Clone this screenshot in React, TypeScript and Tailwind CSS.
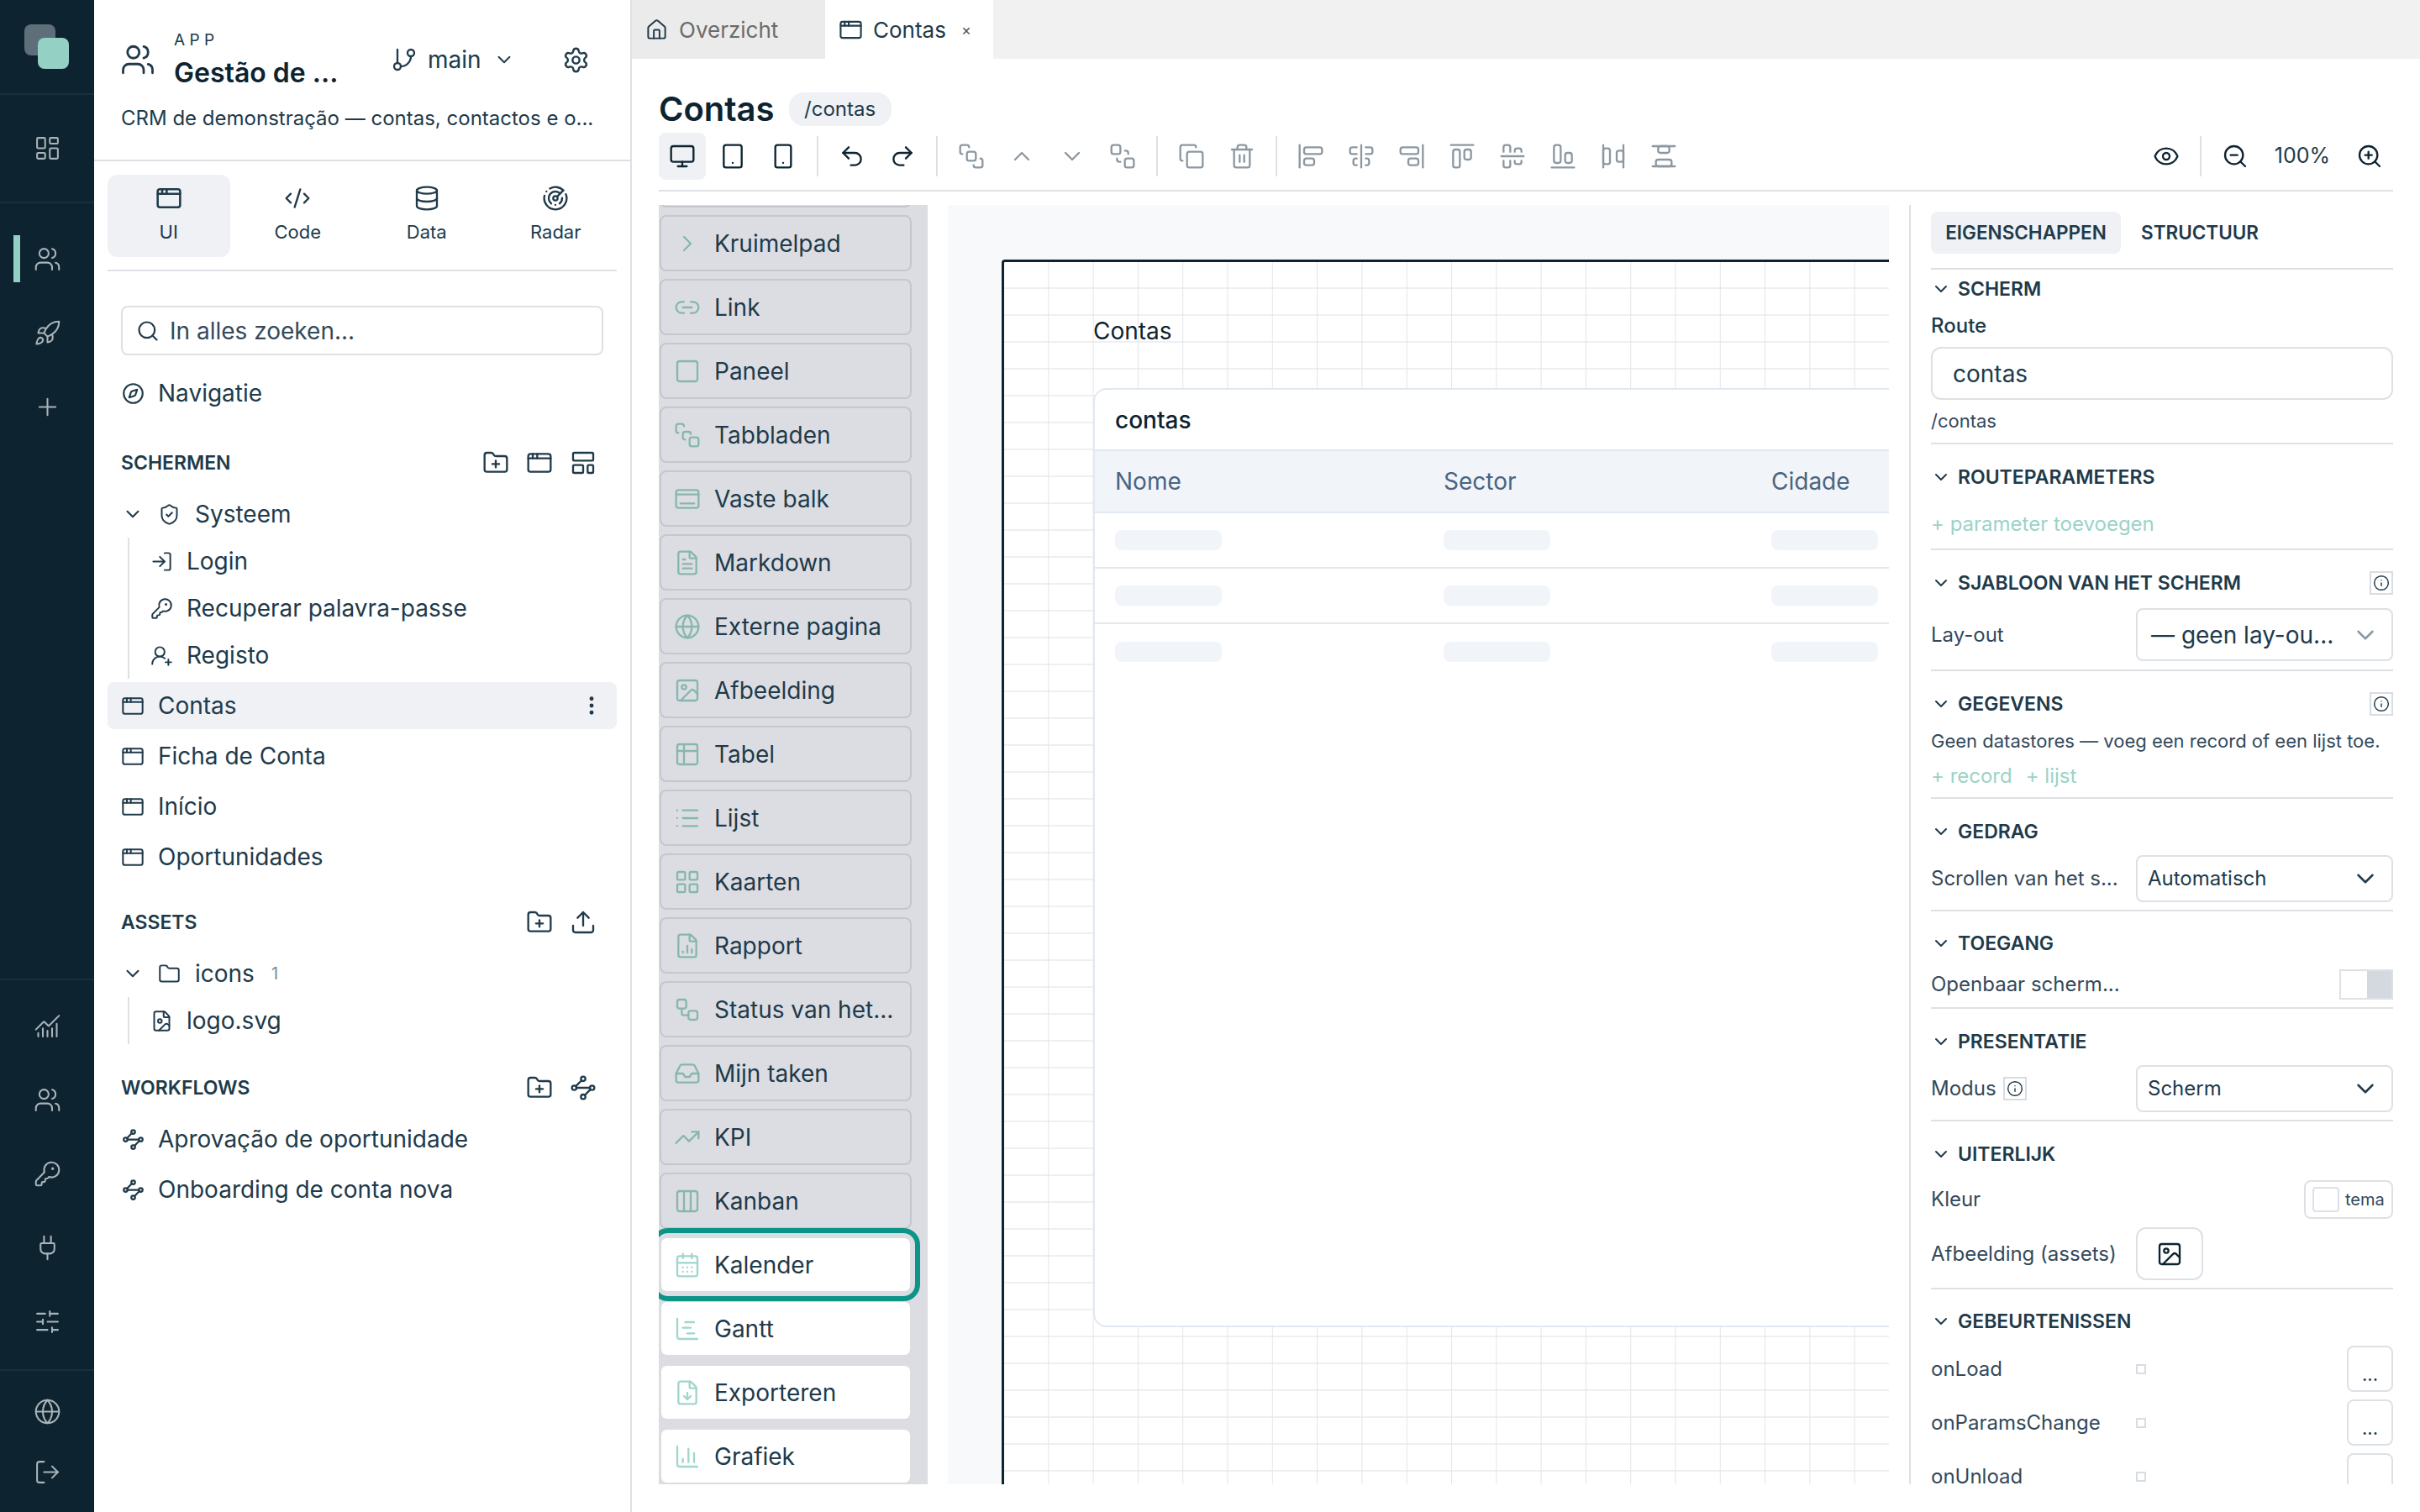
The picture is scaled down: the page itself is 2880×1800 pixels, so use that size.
import type { ReactNode } from "react";
import {
  AlignCenterHorizontal,
  AlignCenterVertical,
  AlignEndHorizontal,
  AlignEndVertical,
  AlignHorizontalSpaceBetween,
  AlignStartHorizontal,
  AlignStartVertical,
  AlignVerticalSpaceBetween,
  AppWindow,
  BringToFront,
  CalendarDays,
  ChartColumn,
  ChartGantt,
  ChartNoAxesCombined,
  ChevronDown,
  ChevronRight,
  ChevronUp,
  CodeXml,
  Columns3,
  Compass,
  Copy,
  Database,
  Eye,
  EllipsisVertical,
  FileChartColumn,
  FileDown,
  FileImage,
  FileText,
  Folder,
  FolderPlus,
  GitBranch,
  Globe,
  House,
  Image,
  Inbox,
  Info,
  KeyRound,
  LayoutDashboard,
  LayoutGrid,
  LayoutTemplate,
  Link2,
  List,
  LogIn,
  LogOut,
  Monitor,
  Plug,
  Plus,
  Radar,
  Redo2,
  Rocket,
  Search,
  SendToBack,
  Settings,
  ShieldCheck,
  SlidersHorizontal,
  Smartphone,
  Square,
  Table2,
  Tablet,
  Trash2,
  TrendingUp,
  Undo2,
  Upload,
  UserRoundPlus,
  Users,
  Workflow,
  ZoomIn,
  ZoomOut,
} from "lucide-react";

// lucide has no match for these palette and workflow glyphs
function TabsGlyph({ size = 32, strokeWidth = 1.75 }: { size?: number; strokeWidth?: number }) {
  return (
    <svg width={size} height={size} viewBox="0 0 24 24" fill="none" stroke="currentColor" strokeWidth={strokeWidth} strokeLinecap="round" strokeLinejoin="round">
      <path d="M4 10a2 2 0 0 1-2-2V4a2 2 0 0 1 2-2h3a2 2 0 0 1 2 2" />
      <path d="M10 16a2 2 0 0 1-2-2v-3a2 2 0 0 1 2-2h3a2 2 0 0 1 2 2" />
      <rect x="14" y="14" width="8" height="8" rx="2" />
    </svg>
  );
}

function BarGlyph({ size = 32, strokeWidth = 1.75 }: { size?: number; strokeWidth?: number }) {
  return (
    <svg width={size} height={size} viewBox="0 0 24 24" fill="none" stroke="currentColor" strokeWidth={strokeWidth} strokeLinecap="round" strokeLinejoin="round">
      <rect x="2" y="4" width="20" height="16" rx="2" />
      <path d="M2 8h20" />
      <path d="M6 16h12" />
    </svg>
  );
}

function WaypointGlyph({ size = 27, strokeWidth = 2 }: { size?: number; strokeWidth?: number }) {
  return (
    <svg width={size} height={size} viewBox="0 0 24 24" fill="none" stroke="currentColor" strokeWidth={strokeWidth} strokeLinecap="round" strokeLinejoin="round">
      <circle cx="12" cy="4" r="2" />
      <circle cx="4" cy="12" r="2" />
      <circle cx="20" cy="12" r="2" />
      <circle cx="12" cy="20" r="2" />
      <path d="m10.6 5.4-5.2 5.2" />
      <path d="m18.6 13.4-5.2 5.2" />
      <path d="M6 12h12" />
    </svg>
  );
}

const paletteItems = [
  { label: "Kruimelpad", icon: ChevronRight },
  { label: "Link", icon: Link2 },
  { label: "Paneel", icon: Square },
  { label: "Tabbladen", icon: TabsGlyph },
  { label: "Vaste balk", icon: BarGlyph },
  { label: "Markdown", icon: FileText },
  { label: "Externe pagina", icon: Globe },
  { label: "Afbeelding", icon: Image },
  { label: "Tabel", icon: Table2 },
  { label: "Lijst", icon: List },
  { label: "Kaarten", icon: LayoutGrid },
  { label: "Rapport", icon: FileChartColumn },
  { label: "Status van het...", icon: Workflow },
  { label: "Mijn taken", icon: Inbox },
  { label: "KPI", icon: TrendingUp },
  { label: "Kanban", icon: Columns3 },
];

const lightItems = [
  { label: "Gantt", icon: ChartGantt },
  { label: "Exporteren", icon: FileDown },
  { label: "Grafiek", icon: ChartColumn },
];

function RailIcon({ children }: { children: ReactNode }) {
  return <div className="flex h-[88px] items-center justify-center text-[#aab4b9]">{children}</div>;
}

function Rail() {
  return (
    <aside className="flex h-full w-[112px] shrink-0 flex-col bg-[#0d2330]">
      <div className="flex h-[113px] shrink-0 border-b-2 border-[#16303f] pl-[29px] pt-[29px]">
        <div className="relative h-[37px] w-[37px] rounded-[8px] bg-[#5f6f79]">
          <div className="absolute left-[16px] top-[16px] h-[37px] w-[37px] rounded-[8px] bg-[#95d0c5]" />
        </div>
      </div>
      <div className="flex h-[129px] shrink-0 items-center justify-center border-b-2 border-[#16303f] text-[#aab4b9]">
        <LayoutDashboard size={33} strokeWidth={1.5} />
      </div>
      <div className="relative mt-[22px] flex h-[88px] items-center justify-center text-[#aab4b9]">
        <div className="absolute left-[16px] top-[16px] h-[56px] w-[8px] bg-[#95d0c5]" />
        <Users size={33} strokeWidth={1.5} />
      </div>
      <RailIcon>
        <Rocket size={33} strokeWidth={1.5} />
      </RailIcon>
      <RailIcon>
        <Plus size={33} strokeWidth={1.5} />
      </RailIcon>
      <div className="mt-auto border-t-2 border-[#16303f] pb-[13px] pt-[10px]">
        <RailIcon>
          <ChartNoAxesCombined size={33} strokeWidth={1.5} />
        </RailIcon>
        <RailIcon>
          <Users size={33} strokeWidth={1.5} />
        </RailIcon>
        <RailIcon>
          <KeyRound size={33} strokeWidth={1.5} />
        </RailIcon>
        <RailIcon>
          <Plug size={33} strokeWidth={1.5} />
        </RailIcon>
        <RailIcon>
          <SlidersHorizontal size={33} strokeWidth={1.5} />
        </RailIcon>
      </div>
      <div className="border-t-2 border-[#16303f] pb-[12px] pt-[12px]">
        <div className="flex h-[72px] items-center justify-center text-[#aab4b9]">
          <Globe size={33} strokeWidth={1.5} />
        </div>
        <div className="flex h-[72px] items-center justify-center text-[#aab4b9]">
          <LogOut size={33} strokeWidth={1.5} />
        </div>
      </div>
    </aside>
  );
}

function TreeRow({ icon, label, active }: { icon: ReactNode; label: string; active?: boolean }) {
  return (
    <div className={`flex h-[56px] items-center rounded-[8px] pl-[16px] pr-[16px] text-[28px] text-[#203a4a] ${active ? "bg-[#eff1f5]" : ""}`}>
      <div className="flex w-[28px] justify-center">{icon}</div>
      <span className="ml-[16px]">{label}</span>
      {active && <EllipsisVertical size={28} strokeWidth={2.25} className="ml-auto" />}
    </div>
  );
}

function NestedRow({ icon, label }: { icon: ReactNode; label: string }) {
  return (
    <div className="flex h-[56px] items-center pl-[24px] text-[28px] text-[#203a4a]">
      <div className="flex w-[28px] justify-center">{icon}</div>
      <span className="ml-[16px]">{label}</span>
    </div>
  );
}

function SectionHead({ title, children, className }: { title: string; children: ReactNode; className: string }) {
  return (
    <div className={`flex h-[40px] items-center justify-between pl-[16px] pr-[24px] text-[#203a4a] ${className}`}>
      <span className="text-[23px] font-semibold">{title}</span>
      <div className="flex gap-[20px]">{children}</div>
    </div>
  );
}

function ModeTab({ icon, label, active }: { icon: ReactNode; label: string; active?: boolean }) {
  return (
    <div className={`flex h-[98px] flex-col items-center rounded-[12px] pt-[12px] text-[#203a4a] ${active ? "bg-[#eff1f5]" : ""}`}>
      <div className="h-[32px]">{icon}</div>
      <span className="mt-[8px] text-[22px]">{label}</span>
    </div>
  );
}

function LeftPanel() {
  return (
    <div className="h-full w-[640px] shrink-0 border-r-2 border-[#dde1e6]">
      <header className="h-[192px] border-b-2 border-[#dde1e6] px-[32px] text-[#203a4a]">
        <div className="flex h-[112px] items-center pt-[30px]">
          <Users size={42} strokeWidth={1.6} className="-ml-[1px]" />
          <div className="ml-[22px] w-[246px]">
            <div className="text-[19px] leading-[26px] tracking-[0.28em]">APP</div>
            <div className="mt-[6px] text-[32px] font-semibold leading-[40px] text-[#0d2330]">Gestão de ...</div>
          </div>
          <GitBranch size={32} strokeWidth={1.75} className="ml-[12px]" />
          <span className="ml-[12px] text-[28px]">main</span>
          <ChevronDown size={26} strokeWidth={1.75} className="ml-[14px]" />
          <Settings size={33} strokeWidth={1.75} className="ml-[56px]" />
        </div>
        <p className="mt-[11px] whitespace-nowrap text-[24px] leading-[36px]">CRM de demonstração — contas, contactos e o...</p>
      </header>

      <div className="mx-[16px] grid grid-cols-4 gap-[8px] border-b-2 border-[#dde1e6] pb-[15px] pt-[16px]">
        <ModeTab active label="UI" icon={<AppWindow size={32} strokeWidth={1.9} />} />
        <ModeTab label="Code" icon={<CodeXml size={32} strokeWidth={1.75} />} />
        <ModeTab label="Data" icon={<Database size={32} strokeWidth={1.75} />} />
        <ModeTab label="Radar" icon={<Radar size={32} strokeWidth={1.75} />} />
      </div>

      <div className="mx-[32px] mt-[41px] flex h-[59px] items-center rounded-[8px] border-2 border-[#dde1e6] pl-[16px] text-[#203a4a]">
        <Search size={28} strokeWidth={1.9} />
        <span className="ml-[12px] text-[28px] text-[#33495a]">In alles zoeken...</span>
      </div>

      <div className="mx-[16px] mt-[17px]">
        <TreeRow label="Navigatie" icon={<Compass size={27} strokeWidth={1.9} />} />
      </div>

      <SectionHead title="SCHERMEN" className="mx-[16px] mt-[35px]">
        <FolderPlus size={32} strokeWidth={1.75} />
        <AppWindow size={32} strokeWidth={1.75} />
        <LayoutTemplate size={32} strokeWidth={1.75} />
      </SectionHead>

      <div className="mx-[16px] mt-[13px]">
        <div className="flex h-[56px] items-center pl-[16px] text-[28px] text-[#203a4a]">
          <div className="flex w-[28px] justify-center">
            <ChevronDown size={26} strokeWidth={1.9} />
          </div>
          <div className="ml-[15px] flex w-[28px] justify-center">
            <ShieldCheck size={27} strokeWidth={1.75} />
          </div>
          <span className="ml-[17px]">Systeem</span>
        </div>
        <div className="ml-[24px] border-l-2 border-[#dde1e6]">
          <NestedRow label="Login" icon={<LogIn size={27} strokeWidth={1.75} />} />
          <NestedRow label="Recuperar palavra-passe" icon={<KeyRound size={27} strokeWidth={1.75} />} />
          <NestedRow label="Registo" icon={<UserRoundPlus size={27} strokeWidth={1.75} />} />
        </div>
        <div className="mt-[4px] flex flex-col gap-[4px]">
          <TreeRow active label="Contas" icon={<AppWindow size={29} strokeWidth={1.75} />} />
          <TreeRow label="Ficha de Conta" icon={<AppWindow size={29} strokeWidth={1.75} />} />
          <TreeRow label="Início" icon={<AppWindow size={29} strokeWidth={1.75} />} />
          <TreeRow label="Oportunidades" icon={<AppWindow size={29} strokeWidth={1.75} />} />
        </div>
      </div>

      <SectionHead title="ASSETS" className="mx-[16px] mt-[30px]">
        <FolderPlus size={32} strokeWidth={1.75} />
        <Upload size={32} strokeWidth={1.75} />
      </SectionHead>

      <div className="mx-[16px] mt-[13px]">
        <div className="flex h-[56px] items-center pl-[16px] text-[28px] text-[#203a4a]">
          <div className="flex w-[28px] justify-center">
            <ChevronDown size={26} strokeWidth={1.9} />
          </div>
          <div className="ml-[15px] flex w-[28px] justify-center">
            <Folder size={27} strokeWidth={1.75} />
          </div>
          <span className="ml-[17px]">icons</span>
          <span className="ml-[20px] text-[20px] text-[#7b8a94]">1</span>
        </div>
        <div className="ml-[24px] border-l-2 border-[#dde1e6]">
          <NestedRow label="logo.svg" icon={<FileImage size={27} strokeWidth={1.75} />} />
        </div>
      </div>

      <SectionHead title="WORKFLOWS" className="mx-[16px] mt-[32px]">
        <FolderPlus size={32} strokeWidth={1.75} />
        <WaypointGlyph size={32} strokeWidth={1.75} />
      </SectionHead>

      <div className="mx-[16px] mt-[13px] flex flex-col gap-[4px]">
        <TreeRow label="Aprovação de oportunidade" icon={<WaypointGlyph />} />
        <TreeRow label="Onboarding de conta nova" icon={<WaypointGlyph />} />
      </div>
    </div>
  );
}

function ToolButton({ children, dim, active }: { children: ReactNode; dim?: boolean; active?: boolean }) {
  return (
    <div className={`flex h-[56px] w-[56px] items-center justify-center rounded-[8px] ${dim ? "text-[#8c98a1]" : "text-[#0d2330]"} ${active ? "bg-[#eff1f5]" : ""}`}>
      {children}
    </div>
  );
}

function Sep() {
  return (
    <div className="flex h-[56px] items-center">
      <div className="mx-[8px] h-[48px] w-[2px] bg-[#dde1e6]" />
    </div>
  );
}

function Toolbar() {
  return (
    <div className="mt-[8px] flex h-[70px] items-start gap-[4px] border-b-2 border-[#dde1e6]">
      <ToolButton active>
        <Monitor size={32} strokeWidth={1.75} />
      </ToolButton>
      <ToolButton>
        <Tablet size={32} strokeWidth={1.75} />
      </ToolButton>
      <ToolButton>
        <Smartphone size={32} strokeWidth={1.75} />
      </ToolButton>
      <Sep />
      <ToolButton>
        <Undo2 size={32} strokeWidth={1.75} />
      </ToolButton>
      <ToolButton>
        <Redo2 size={32} strokeWidth={1.75} />
      </ToolButton>
      <Sep />
      <ToolButton dim>
        <BringToFront size={32} strokeWidth={1.75} />
      </ToolButton>
      <ToolButton dim>
        <ChevronUp size={32} strokeWidth={1.75} />
      </ToolButton>
      <ToolButton dim>
        <ChevronDown size={32} strokeWidth={1.75} />
      </ToolButton>
      <ToolButton dim>
        <SendToBack size={32} strokeWidth={1.75} />
      </ToolButton>
      <Sep />
      <ToolButton dim>
        <Copy size={32} strokeWidth={1.75} />
      </ToolButton>
      <ToolButton dim>
        <Trash2 size={32} strokeWidth={1.75} />
      </ToolButton>
      <Sep />
      <ToolButton dim>
        <AlignStartVertical size={32} strokeWidth={1.75} />
      </ToolButton>
      <ToolButton dim>
        <AlignCenterVertical size={32} strokeWidth={1.75} />
      </ToolButton>
      <ToolButton dim>
        <AlignEndVertical size={32} strokeWidth={1.75} />
      </ToolButton>
      <ToolButton dim>
        <AlignStartHorizontal size={32} strokeWidth={1.75} />
      </ToolButton>
      <ToolButton dim>
        <AlignCenterHorizontal size={32} strokeWidth={1.75} />
      </ToolButton>
      <ToolButton dim>
        <AlignEndHorizontal size={32} strokeWidth={1.75} />
      </ToolButton>
      <ToolButton dim>
        <AlignHorizontalSpaceBetween size={32} strokeWidth={1.75} />
      </ToolButton>
      <ToolButton dim>
        <AlignVerticalSpaceBetween size={32} strokeWidth={1.75} />
      </ToolButton>

      <div className="ml-auto flex items-center">
        <ToolButton>
          <Eye size={32} strokeWidth={1.75} />
        </ToolButton>
        <div className="mx-[4px]">
          <Sep />
        </div>
        <ToolButton>
          <ZoomOut size={32} strokeWidth={1.75} />
        </ToolButton>
        <span className="w-[104px] text-center text-[25px] text-[#203a4a]">100%</span>
        <ToolButton>
          <ZoomIn size={32} strokeWidth={1.75} />
        </ToolButton>
      </div>
    </div>
  );
}

function PaletteCard({ label, icon: Icon, light }: { label: string; icon: any; light?: boolean }) {
  return (
    <div
      className={`flex h-[67px] w-[300px] shrink-0 items-center rounded-[8px] text-[28px] text-[#203a4a] ${
        light ? "border-2 border-[#dcdde3] bg-white bg-clip-padding" : "border-2 border-[#c3c7ce]"
      }`}
    >
      <div className={`ml-[15px] flex w-[32px] justify-center ${light ? "text-[#a0d6cb]" : "text-[#86b7af]"}`}>
        <Icon size={32} strokeWidth={1.75} />
      </div>
      <span className="ml-[16px]">{label}</span>
    </div>
  );
}

function Palette() {
  return (
    <div className="h-full w-[320px] shrink-0 overflow-hidden bg-[#dcdde3] pl-[1px]">
      <div className="-mt-[64px] flex flex-col gap-[9px]">
        <div className="h-[67px] w-[300px] shrink-0 rounded-[8px] border-2 border-[#c3c7ce]" />
        {paletteItems.map((item) => (
          <PaletteCard key={item.label} label={item.label} icon={item.icon} />
        ))}
        <div className="relative z-10 w-[300px] rounded-[10px] outline-[6px] outline-offset-[4px] outline-[#0d9488]">
          <PaletteCard light label="Kalender" icon={CalendarDays} />
        </div>
        {lightItems.map((item) => (
          <PaletteCard key={item.label} light label={item.label} icon={item.icon} />
        ))}
      </div>
    </div>
  );
}

function SkeletonRow({ last }: { last?: boolean }) {
  return (
    <div className={`grid h-[66px] w-[1170px] grid-cols-[391px_390px_389px] items-center pl-[24px] ${last ? "" : "border-b-2 border-[#e2e8f0]"}`}>
      <div className="h-[24px] w-[127px] rounded-[8px] bg-[#f1f4f9]" />
      <div className="h-[24px] w-[127px] rounded-[8px] bg-[#f1f4f9]" />
      <div className="h-[24px] w-[127px] rounded-[8px] bg-[#f1f4f9]" />
    </div>
  );
}

function Canvas() {
  return (
    <div className="h-full w-[1120px] shrink-0 overflow-hidden bg-[#f8f9fb] pl-[64px] pt-[65px]">
      <div className="h-[1800px] w-[1400px] rounded-tl-[4px] border-l-[3px] border-t-[3px] border-[#0d2330] bg-white bg-[linear-gradient(to_right,transparent_calc(100%-1px),#e3e5e8_calc(100%-1px)),linear-gradient(to_bottom,transparent_calc(100%-2px),#eeeff1_calc(100%-2px))] bg-[size:53.3px_32px] pl-[106px] pt-[62px]">
        <div className="h-[40px] text-[28px] leading-[40px] text-[#0d2330]">Contas</div>
        <div className="mt-[48px] h-[1118px] w-[1200px] rounded-[16px] border-2 border-[#e2e8f0] bg-white">
          <div className="flex h-[73px] items-center border-b-2 border-[#e2e8f0] pl-[24px] text-[28px] font-medium text-[#0d2330]">contas</div>
          <div className="grid h-[74px] grid-cols-[391px_390px_389px] items-center border-b-2 border-[#e2e8f0] bg-[#f1f4f9] pl-[24px] text-[28px] text-[#4a6480]">
            <span>Nome</span>
            <span>Sector</span>
            <span>Cidade</span>
          </div>
          <SkeletonRow />
          <SkeletonRow />
          <SkeletonRow last />
        </div>
      </div>
    </div>
  );
}

function PropHead({ title, info }: { title: string; info?: boolean }) {
  return (
    <div className="flex h-[40px] items-center text-[#203a4a]">
      <div className="flex w-[24px] justify-center">
        <ChevronDown size={24} strokeWidth={2} />
      </div>
      <span className="ml-[8px] text-[23px] font-semibold">{title}</span>
      {info && <InfoBox className="ml-auto" />}
    </div>
  );
}

function InfoBox({ className }: { className?: string }) {
  return (
    <div className={`flex h-[28px] w-[28px] items-center justify-center border-2 border-[#d8dde3] text-[#203a4a] ${className ?? ""}`}>
      <Info size={20} strokeWidth={1.75} />
    </div>
  );
}

function SelectBox({ value, tall, dim }: { value: string; tall?: boolean; dim?: boolean }) {
  return (
    <div
      className={`flex items-center justify-between rounded-[8px] border-2 border-[#dde1e6] text-[#203a4a] ${
        tall ? "h-[63px] pl-[16px] pr-[14px] text-[28px]" : "h-[56px] pl-[12px] pr-[14px] text-[24px]"
      }`}
    >
      <span>{value}</span>
      <ChevronDown size={34} strokeWidth={1.75} className={dim ? "text-[#8c98a1]" : "text-[#203a4a]"} />
    </div>
  );
}

function EventRow({ label }: { label: string }) {
  return (
    <div className="flex h-[55px] items-center text-[24px] text-[#33495a]">
      <span className="w-[244px]">{label}</span>
      <div className="h-[12px] w-[12px] border-2 border-[#d8dde3]" />
      <div className="ml-auto flex h-[55px] w-[55px] items-end justify-center rounded-[8px] border-2 border-[#dde1e6] pb-[8px] text-[22px] leading-none text-[#203a4a]">...</div>
    </div>
  );
}

function Properties() {
  return (
    <div className="h-full w-[576px] shrink-0 overflow-hidden border-l-2 border-[#dde1e6] pl-[24px]">
      <div className="flex h-[77px] items-start gap-[24px] border-b-2 border-[#dde1e6] pt-[8px] text-[22.5px] font-semibold text-[#203a4a]">
        <div className="flex h-[50px] w-[226px] items-center justify-center rounded-[8px] bg-[#eff1f5]">EIGENSCHAPPEN</div>
        <div className="flex h-[50px] items-center">STRUCTUUR</div>
      </div>

      <section className="border-b-2 border-[#dde1e6] pb-[11px] pt-[3px]">
        <PropHead title="SCHERM" />
        <div className="mt-[9px] h-[30px] text-[24px] font-medium leading-[30px] text-[#203a4a]">Route</div>
        <div className="mt-[10px] flex h-[63px] items-center rounded-[12px] border-2 border-[#dde1e6] pl-[24px] text-[28px] text-[#203a4a]">contas</div>
        <div className="mt-[10px] h-[30px] text-[22px] leading-[30px] text-[#33495a]">/contas</div>
      </section>

      <section className="border-b-2 border-[#dde1e6] pb-[14px] pt-[19px]">
        <PropHead title="ROUTEPARAMETERS" />
        <div className="mt-[21px] h-[30px] text-[24px] leading-[30px] text-[#9bd3c8]">+ parameter toevoegen</div>
      </section>

      <section className="border-b-2 border-[#dde1e6] pb-[10px] pt-[19px]">
        <PropHead title="SJABLOON VAN HET SCHERM" info />
        <div className="mt-[10px] flex items-center">
          <span className="w-[244px] text-[24px] text-[#33495a]">Lay-out</span>
          <div className="flex-1">
            <SelectBox tall dim value="— geen lay-ou..." />
          </div>
        </div>
      </section>

      <section className="border-b-2 border-[#dde1e6] pb-[10px] pt-[19px]">
        <PropHead title="GEGEVENS" info />
        <div className="mt-[9px] h-[30px] whitespace-nowrap text-[22px] leading-[30px] text-[#33495a]">Geen datastores — voeg een record of een lijst toe.</div>
        <div className="mt-[12px] flex h-[30px] gap-[16px] text-[24px] leading-[30px] text-[#9bd3c8]">
          <span>+ record</span>
          <span>+ lijst</span>
        </div>
      </section>

      <section className="border-b-2 border-[#dde1e6] pb-[9px] pt-[19px]">
        <PropHead title="GEDRAG" />
        <div className="mt-[8px] flex items-center">
          <span className="w-[244px] text-[24px] text-[#33495a]">Scrollen van het s...</span>
          <div className="flex-1">
            <SelectBox value="Automatisch" />
          </div>
        </div>
      </section>

      <section className="border-b-2 border-[#dde1e6] pb-[9px] pt-[18px]">
        <PropHead title="TOEGANG" />
        <div className="mt-[11px] flex h-[36px] items-center justify-between">
          <span className="text-[24px] text-[#33495a]">Openbaar scherm...</span>
          <div className="flex h-[36px] w-[64px] justify-end border-2 border-[#dde1e6]">
            <div className="h-full w-[29px] bg-[#d3d9df]" />
          </div>
        </div>
      </section>

      <section className="border-b-2 border-[#dde1e6] pb-[9px] pt-[19px]">
        <PropHead title="PRESENTATIE" />
        <div className="mt-[8px] flex items-center">
          <div className="flex w-[244px] items-center gap-[8px] text-[24px] text-[#33495a]">
            <span>Modus</span>
            <InfoBox />
          </div>
          <div className="flex-1">
            <SelectBox value="Scherm" />
          </div>
        </div>
      </section>

      <section className="border-b-2 border-[#dde1e6] pb-[9px] pt-[19px]">
        <PropHead title="UITERLIJK" />
        <div className="mt-[11px] flex h-[46px] items-center justify-between">
          <span className="text-[24px] text-[#33495a]">Kleur</span>
          <div className="flex h-[46px] w-[106px] items-center rounded-[8px] border-2 border-[#dde1e6] pl-[8px]">
            <div className="h-[30px] w-[32px] rounded-[4px] border-2 border-[#dde1e6]" />
            <span className="ml-[7px] text-[20px] text-[#33495a]">tema</span>
          </div>
        </div>
        <div className="mt-[10px] flex h-[63px] items-center">
          <span className="w-[244px] text-[24px] text-[#33495a]">Afbeelding (assets)</span>
          <div className="flex h-[63px] w-[80px] items-center justify-center rounded-[12px] border-2 border-[#dde1e6] text-[#0d2330]">
            <Image size={32} strokeWidth={1.75} />
          </div>
        </div>
      </section>

      <section className="pt-[18px]">
        <PropHead title="GEBEURTENISSEN" />
        <div className="mt-[9px] flex flex-col gap-[9px]">
          <EventRow label="onLoad" />
          <EventRow label="onParamsChange" />
          <EventRow label="onUnload" />
        </div>
      </section>
    </div>
  );
}

function Main() {
  return (
    <main className="flex h-full min-w-0 flex-1 flex-col">
      <div className="flex h-[70px] shrink-0 bg-[#f1f1f1]">
        <div className="flex w-[230px] items-center bg-[#ebebeb] pl-[16px] text-[26px] text-[#6b6b6b]">
          <House size={27} strokeWidth={1.75} className="text-[#203a4a]" />
          <span className="ml-[13px]">Overzicht</span>
        </div>
        <div className="flex w-[200px] items-center bg-white pl-[16px] text-[26px] text-[#203a4a]">
          <AppWindow size={29} strokeWidth={1.75} />
          <span className="ml-[12px]">Contas</span>
          <span className="ml-[18px] text-[18px] text-[#555]">×</span>
        </div>
      </div>
      <div className="px-[32px]">
        <div className="flex items-center gap-[17px] pt-[40px]">
          <h1 className="text-[40px] font-semibold leading-[40px] text-[#0d2330]">Contas</h1>
          <span className="flex h-[40px] w-[122px] items-center justify-center rounded-[18px] bg-[#eff1f5] text-[24px] text-[#203a4a]">/contas</span>
        </div>
        <Toolbar />
      </div>
      <div className="ml-[32px] mt-[16px] flex h-[1523px] gap-[24px] overflow-hidden">
        <Palette />
        <Canvas />
        <Properties />
      </div>
    </main>
  );
}

export default function App() {
  return (
    <div className="flex h-[1800px] w-[2880px] overflow-hidden bg-white font-['Inter',sans-serif]">
      <Rail />
      <LeftPanel />
      <Main />
    </div>
  );
}
